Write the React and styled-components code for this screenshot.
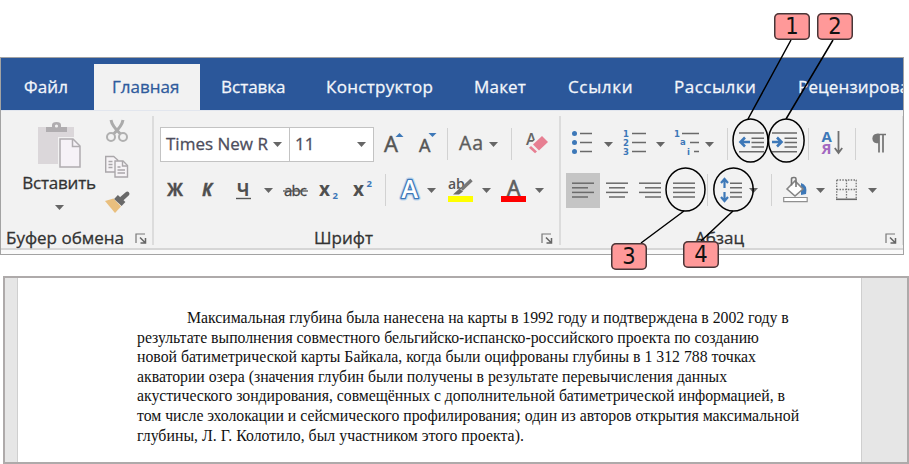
import React from 'react';
import styled, { createGlobalStyle } from 'styled-components';

const UI = '"Open Sans", "Noto Sans", sans-serif';
const INK = '#6a6a6a';
const BLUE = '#3d78b8';

const GlobalStyle = createGlobalStyle`
  * { box-sizing: border-box; }
  body { margin: 0; background: #fff; overflow: hidden; }
  svg { display: block; }
`;

const Page = styled.main`
  position: relative;
  width: 909px;
  height: 464px;
  padding-top: 57px;
  overflow: hidden;
  font-family: ${UI};
`;

/* ---------- ribbon ---------- */
const Ribbon = styled.section`
  width: 904px;
  height: 198px;
  border: 1px solid #a3a3a3;
  background: #fafafa;
  overflow: hidden;
  -webkit-text-stroke: 0.3px currentColor;

  svg { -webkit-text-stroke: initial; }
`;

const TabBar = styled.nav`
  display: flex;
  align-items: flex-end;
  height: 52px;
  background: #2b579a;
  overflow: hidden;
`;

const Tab = styled.div`
  flex: none;
  width: ${(p) => p.$w}px;
  height: 46px;
  padding-left: ${(p) => p.$inset}px;
  font-size: 17px;
  line-height: 46px;
  letter-spacing: ${(p) => p.$track || 0}px;
  white-space: nowrap;
  color: ${(p) => (p.$active ? '#2f5b9d' : '#f3f6fb')};
  background: ${(p) => (p.$active ? '#f2f2f2' : 'transparent')};
`;

const Body = styled.div`
  display: flex;
  height: 140px;
  padding-top: 1px;
  background: #f2f2f2;
  border-top: 1px solid #e2e6ee;
  border-bottom: 2px solid #d6d6d6;
`;

const Group = styled.div`
  display: flex;
  flex-direction: column;
  flex: none;
  width: ${(p) => p.$w}px;
  height: 137px;
`;

const GroupDivider = styled.div`
  flex: none;
  width: 2px;
  height: 129px;
  margin-top: 4px;
  background: #dcdcdc;
`;

const Tools = styled.div`
  height: 117px;
  padding-top: 14px;
`;

const Row = styled.div`
  display: flex;
  align-items: center;
  height: 36px;
  margin-bottom: 10px;
`;

const Footer = styled.div`
  display: flex;
  align-items: center;
  height: 18px;
  padding-left: ${(p) => p.$inset}px;
`;

const Label = styled.span`
  width: ${(p) => p.$w}px;
  font-size: 17px;
  line-height: 18px;
  white-space: nowrap;
  color: #333;
`;

const Clipboard = styled.div`
  display: flex;
  height: 117px;
`;

const PasteButton = styled.div`
  display: flex;
  flex-direction: column;
  align-items: center;
  width: 80px;
  margin-left: 18px;
  padding-top: 10px;
`;

const PasteText = styled.span`
  margin-top: 3px;
  font-size: 17px;
  line-height: 24px;
  letter-spacing: -0.2px;
  white-space: nowrap;
  color: #333;
`;

const ClipboardSide = styled.div`
  display: flex;
  flex-direction: column;
  gap: 12px;
  margin-left: 6px;
  padding-top: 7px;
`;

const Glyph = styled.svg`
  flex: none;
  width: ${(p) => p.$w}px;
  height: ${(p) => p.$h || 36}px;
  margin-left: ${(p) => p.$ml || 0}px;
  overflow: visible;
`;

const Combo = styled.div`
  display: flex;
  align-items: center;
  flex: none;
  width: ${(p) => p.$w}px;
  height: 35px;
  margin-left: ${(p) => p.$ml}px;
  padding: 0 7px 0 5px;
  border: 1px solid #c3c3c3;
  background: #fff;
  font-size: 17px;
  white-space: nowrap;
  color: #4d4d5c;
`;

const ComboValue = styled.span`
  flex: 1;
  line-height: 24px;
  margin-top: -1px;
`;

const Divider = styled.i`
  flex: none;
  width: 1px;
  height: 32px;
  margin-left: ${(p) => p.$ml}px;
  background: #d2d2d2;
`;

const Style = styled.span`
  flex: none;
  width: ${(p) => p.$w}px;
  margin-left: ${(p) => p.$ml}px;
  font-size: 17px;
  line-height: 24px;
  font-weight: 700;
  font-style: ${(p) => (p.$italic ? 'italic' : 'normal')};
  white-space: nowrap;
  color: #4f4f4f;
`;

const Selected = styled.div`
  flex: none;
  display: flex;
  align-items: center;
  width: 34px;
  height: 35px;
  margin-left: 5px;
  background: #c5c5c5;
`;

/* ---------- document ---------- */
const Document = styled.section`
  display: flex;
  width: 906px;
  height: 188px;
  margin: 21px 0 0 3px;
  border: 2px solid #aeaaaa;
  background: #e6e6e6;
`;

const Sheet = styled.article`
  width: 845px;
  margin-left: 12px;
  padding: 30px 0 0 119px;
  border: solid #cfcfcf;
  border-width: 0 1px;
  background: #fff;
  color: #111;
  font-family: "Liberation Serif", "Times New Roman", serif;
  font-size: 15.8px;
`;

const Line = styled.div`
  height: 19.6px;
  line-height: 19.6px;
  padding-left: ${(p) => p.$indent || 0}px;
  letter-spacing: ${(p) => p.$track}px;
  white-space: nowrap;
`;

/* ---------- callouts ---------- */
const Leaders = styled.svg`
  position: absolute;
  left: 0;
  top: 0;
  width: 909px;
  height: 464px;
  pointer-events: none;
`;

const Callout = styled.div`
  position: absolute;
  left: ${(p) => p.$x}px;
  top: ${(p) => p.$y}px;
  width: 36px;
  height: 27px;
  border-radius: 5px;
  background: #ff9999;
  box-shadow: inset 0 0 0 1.5px #463638;
  font-family: "DejaVu Sans Condensed", "DejaVu Sans", sans-serif;
  font-stretch: condensed;
  font-size: 23.5px;
  line-height: 27px;
  text-align: center;
  color: #111;
`;

/* ---------- icons ---------- */
const Caret = ({ ml }) => (
  <Glyph $w={9} $h={5} $ml={ml} viewBox="0 0 9 5">
    <path d="M0 0h9L4.5 5z" fill="#666" />
  </Glyph>
);

const Launcher = ({ ml }) => (
  <Glyph $w={12} $h={11} $ml={ml} viewBox="0 0 12 11">
    <path d="M1 10V1h9" fill="none" stroke="#777" strokeWidth="1.2" />
    <path d="M5 4.500l5 5M10.500 5v5h-5" fill="none" stroke="#666" strokeWidth="1.5" />
  </Glyph>
);

const PasteIcon = () => (
  <Glyph $w={44} $h={46} viewBox="0 0 44 46">
    <path d="M1 5h36v37H1z" fill="#dbd7da" />
    <path d="M9 10V5h6V3q0-3 4.500-3T24 3v2h6v5z" fill="#b0adb0" />
    <circle cx="19.500" cy="4" r="1.600" fill="#f2f2f2" />
    <path d="M21 15h18l7 8v24H21z" fill="#f2f2f2" />
    <path d="M23 17h13l7 7v21H23z" fill="#f6f2f7" stroke="#b0acb0" strokeWidth="1.500" />
    <path d="M35.500 17v7.500H43" fill="none" stroke="#b0acb0" strokeWidth="1.500" />
  </Glyph>
);

const CutIcon = () => (
  <Glyph $w={24} $h={24} viewBox="0 0 24 24">
    <path d="M6 1q1 6 9.500 14M18 1q-1 6-9.500 14" fill="none" stroke="#ababab" strokeWidth="3" />
    <circle cx="6" cy="18" r="4" fill="none" stroke="#b0b0b0" strokeWidth="2" />
    <circle cx="18" cy="18" r="4" fill="none" stroke="#b0b0b0" strokeWidth="2" />
  </Glyph>
);

const CopyIcon = () => (
  <Glyph $w={24} $h={24} viewBox="0 0 24 24">
    <g fill="#f6f3f6" stroke="#aaa7aa" strokeWidth="1.400">
      <path d="M.7 1.500h8l4 3.500V17h-12z" />
      <path d="M10 6h8l4.500 4.500V22H10z" />
      <path d="M17.500 6v5h5M3.500 6.500h4M3.500 9.500h4M3.500 12.500h4M12.500 12h3M12.500 15h7.500M12.500 18h7.500" fill="none" />
    </g>
  </Glyph>
);

const BrushIcon = () => (
  <Glyph $w={24} $h={24} viewBox="0 0 24 24">
    <path d="M0 10l8.500-2.500 7.500 8L10 22z" fill="#e9bf7e" />
    <path d="M11 6l7.500 7" stroke="#696969" strokeWidth="5.500" />
    <path d="M17 7.500l5.200-4.700" stroke="#696969" strokeWidth="4.500" strokeLinecap="round" />
  </Glyph>
);

const GrowFont = ({ ml, w, size, up }) => (
  <Glyph $w={w} $ml={ml} viewBox={`0 0 ${w} 36`}>
    <text x="0" y="26" fontFamily={UI} fontSize={size} fill="#555" stroke="#555" strokeWidth=".5">A</text>
    <path d={up ? `M${w - 7.5} 11h8l-4-4z` : `M${w - 7.5} 7h8l-4 4z`} fill={BLUE} />
  </Glyph>
);

const CaseIcon = ({ ml }) => (
  <Glyph $w={24} $ml={ml} viewBox="0 0 24 36">
    <text x="0" y="23.500" fontFamily={UI} fontSize="19.500" textLength="24" fill="#5c5c5c" stroke="#5c5c5c" strokeWidth=".4">Aa</text>
  </Glyph>
);

const ClearFormat = ({ ml }) => (
  <Glyph $w={24} $ml={ml} viewBox="0 0 24 36">
    <text x="1" y="18.500" fontFamily={UI} fontSize="16" fontWeight="600" fill="#666">A</text>
    <path d="M5.500 18L16 8l8 7-10.500 10z" fill="#f2f2f2" />
    <path d="M8 18.500l9-8.500 6 6-9 8.500z" fill="#e77f92" />
    <path d="M6 20l6 5.500-2 1.800-6-5.500z" fill="#e77f92" />
  </Glyph>
);

const StrikeIcon = ({ ml }) => (
  <Glyph $w={25} $ml={ml} viewBox="0 0 25 36">
    <text x="1" y="24" fontFamily={UI} fontSize="15" textLength="23" fill="#444" stroke="#444" strokeWidth=".3">abc</text>
    <path d="M0 19h25" stroke="#555" strokeWidth="1.300" />
  </Glyph>
);

const ScriptIcon = ({ ml, sup }) => (
  <Glyph $w={19} $ml={ml} viewBox="0 0 19 36">
    <text x="0" y="24" fontFamily={UI} fontSize="19" fontWeight="700" fill="#505050">x</text>
    <text x="13.500" y={sup ? 15 : 27} fontFamily={UI} fontSize="9.500" fontWeight="700" fill={BLUE}>2</text>
  </Glyph>
);

const EffectsIcon = ({ ml }) => (
  <Glyph $w={21} $ml={ml} viewBox="0 0 21 36">
    <g fontFamily={UI} fontSize="25" fontWeight="600" strokeLinejoin="round">
      <text x="1.500" y="26" textLength="17" fill="none" stroke="#c2d8ee" strokeWidth="5">A</text>
      <text x="1.500" y="26" textLength="17" fill="#fff" stroke={BLUE} strokeWidth="2.600">A</text>
      <text x="1.500" y="26" textLength="17" fill="#fff">A</text>
    </g>
  </Glyph>
);

const HighlightIcon = ({ ml }) => (
  <Glyph $w={25} $ml={ml} viewBox="0 0 25 36">
    <text x="0" y="17" fontFamily={UI} fontSize="14" fontWeight="600" fill="#555">ab</text>
    <path d="M25 6L12 18l-5 5 8-1.500L25 10z" fill="#f2f2f2" />
    <path d="M23.500 8L13.500 17.500" stroke="#777" strokeWidth="3.500" />
    <path d="M11.500 16.500l3.500 3-4 3H5z" fill="#6c6c6c" />
    <path d="M0 24h25v6H0z" fill="#ffff00" />
  </Glyph>
);

const FontColorIcon = ({ ml }) => (
  <Glyph $w={25} $ml={ml} viewBox="0 0 25 36">
    <text x="6" y="24" fontFamily={UI} fontSize="21" fill="#5e5e5e" stroke="#5e5e5e" strokeWidth=".7">A</text>
    <path d="M0 24h25v6H0z" fill="#ff0000" />
  </Glyph>
);

const BulletsIcon = ({ ml }) => (
  <Glyph $w={20} $ml={ml} viewBox="0 0 20 36">
    {[7.5, 16.5, 25.5].map((y) => (
      <g key={y}>
        <circle cx="2.500" cy={y} r="2.500" fill={BLUE} />
        <path d={`M8 ${y}h12`} stroke={INK} strokeWidth="1.500" />
      </g>
    ))}
  </Glyph>
);

const NumbersIcon = ({ ml }) => (
  <Glyph $w={23} $ml={ml} viewBox="0 0 23 36">
    {[7.5, 16.5, 25.5].map((y, i) => (
      <g key={y}>
        <text x="0" y={y + 3.5} fontFamily='"DejaVu Sans", sans-serif' fontSize="8.500" fontWeight="700" fill={BLUE}>{i + 1}</text>
        <path d={`M9 ${y}h14`} stroke={INK} strokeWidth="1.500" />
      </g>
    ))}
  </Glyph>
);

const MultiLevelIcon = ({ ml }) => (
  <Glyph $w={25} $ml={ml} viewBox="0 0 25 36">
    <g fontFamily='"DejaVu Sans", sans-serif' fontSize="8.500" fontWeight="700" fill={BLUE}>
      <text x="0" y="11">1</text>
      <text x="6" y="19">a</text>
      <text x="13" y="29">i</text>
    </g>
    <path d="M8 7.500h17M16 16.500h9M20 25.500h5" stroke={INK} strokeWidth="1.500" />
  </Glyph>
);

const IndentIcon = ({ ml, out }) => (
  <Glyph $w={25} $ml={ml} viewBox="0 0 25 36">
    <path d="M0 7h25M12.500 12.200h12.500M12.500 16.600h12.500M12.500 21h12.500M0 25.800h25" stroke={INK} strokeWidth="1.500" />
    <path d={out ? 'M11 16H2M6 11.500L1.500 16 6 20.500' : 'M0 16h9M5 11.500L9.500 16 5 20.500'} fill="none" stroke={BLUE} strokeWidth="2.600" />
  </Glyph>
);

const SortIcon = ({ ml }) => (
  <Glyph $w={21} $ml={ml} viewBox="0 0 21 36">
    <g fontFamily={UI} fontSize="15" fontWeight="700">
      <text x="-.5" y="15.500" fill={BLUE}>А</text>
      <text x="-.5" y="28" fill="#a268c0">Я</text>
    </g>
    <path d="M16.500 5v21M12.800 22l3.700 5 3.700-5" fill="none" stroke="#707070" strokeWidth="1.800" />
  </Glyph>
);

const PilcrowIcon = ({ ml }) => (
  <Glyph $w={15} $ml={ml} viewBox="0 0 15 36">
    <path d="M6 8.500h9M8 8v18.500M12 8v18.500" stroke="#737373" strokeWidth="1.700" />
    <path d="M8 7.700v9.500H5.500A4.800 4.800 0 0 1 5.500 7.700z" fill="#777" />
  </Glyph>
);

const ALIGN = {
  left: [[0, 22], [0, 16], [0, 22], [0, 16]],
  center: [[0, 22], [3, 16], [0, 22], [3, 16]],
  right: [[0, 22], [6, 16], [0, 22], [6, 16]],
  justify: [[0, 22], [0, 22], [0, 22], [0, 22]],
};

const AlignIcon = ({ ml, kind }) => (
  <Glyph $w={22} $ml={ml} viewBox="0 0 22 36">
    {ALIGN[kind].map(([x, w], i) => (
      <path key={i} d={`M${x} ${11.2 + i * 4.6}h${w}`} stroke={INK} strokeWidth="1.500" />
    ))}
  </Glyph>
);

const SpacingIcon = ({ ml }) => (
  <Glyph $w={22} $ml={ml} viewBox="0 0 22 36">
    <path d="M4.500 7v9M1 11l3.500-4L8 11M4.500 20v9M1 25l3.500 4L8 25" fill="none" stroke={BLUE} strokeWidth="2.200" />
    <path d="M10 11.200h12M10 15.800h12M10 20.400h12M10 25h12" stroke={INK} strokeWidth="1.500" />
  </Glyph>
);

const BucketIcon = ({ ml }) => (
  <Glyph $w={25} $ml={ml} viewBox="0 0 25 36">
    <path d="M18 11q7 2 5 11l-5 1z" fill={BLUE} />
    <path d="M4 17l8-8 8 8-8 7z" fill="#fff" stroke="#858585" strokeWidth="1.600" />
    <path d="M8.500 13.500V7q0-1.500 2-1.500h1q1.500 0 1.500 1.500v8" fill="none" stroke="#777" strokeWidth="1.600" />
    <path d="M.7 25.500h23.500v4.200H.7z" fill="#fff" stroke="#909090" strokeWidth="1.200" />
  </Glyph>
);

const BordersIcon = ({ ml }) => (
  <Glyph $w={21} $ml={ml} viewBox="0 0 21 36">
    <path d="M.7 8h20M.7 17.500h20M.7 8v19M10.500 8v19M20.200 8v19" fill="none" stroke="#777" strokeWidth="1.300" strokeDasharray="1.500 1.300" />
    <path d="M0 27.300h21" stroke="#696969" strokeWidth="1.600" />
  </Glyph>
);

/* ---------- data ---------- */
const TABS = [
  ['Файл', 93, 23, 0.15],
  ['Главная', 106, 18, 0],
  ['Вставка', 106, 21, 0],
  ['Конструктор', 148, 20, 0.3],
  ['Макет', 94, 20, 0.2],
  ['Ссылки', 106, 20, 0.65],
  ['Рассылки', 124, 20, 0.5],
  ['Рецензирование', 160, 20, 0.15],
];

const LINES = [
  ['Максимальная глубина была нанесена на карты в 1992 году и подтверждена в 2002 году в', -0.03],
  ['результате выполнения совместного бельгийско-испанско-российского проекта по созданию', -0.015],
  ['новой батиметрической карты Байкала, когда были оцифрованы глубины в 1 312 788 точках', -0.01],
  ['акватории озера (значения глубин были получены в результате перевычисления данных', -0.015],
  ['акустического зондирования, совмещённых с дополнительной батиметрической информацией, в', -0.04],
  ['том числе эхолокации и сейсмического профилирования; один из авторов открытия максимальной', -0.015],
  ['глубины, Л. Г. Колотило, был участником этого проекта).', 0.04],
];

const CALLOUTS = [
  ['1', 774, 13],
  ['2', 817, 13],
  ['3', 611, 243],
  ['4', 683, 241],
];

export default function App() {
  return (
    <Page>
      <GlobalStyle />
      <Ribbon>
        <TabBar>
          {TABS.map(([name, w, inset, track]) => (
            <Tab key={name} $w={w} $inset={inset} $track={track} $active={name === 'Главная'}>{name}</Tab>
          ))}
        </TabBar>
        <Body>
          <Group $w={151}>
            <Clipboard>
              <PasteButton>
                <PasteIcon />
                <PasteText>Вставить</PasteText>
                <Glyph $w={9} $h={15} viewBox="0 0 9 15"><path d="M0 10h9L4.500 15z" fill="#666" /></Glyph>
              </PasteButton>
              <ClipboardSide>
                <CutIcon />
                <CopyIcon />
                <BrushIcon />
              </ClipboardSide>
            </Clipboard>
            <Footer $inset={5}><Label $w={129}>Буфер обмена</Label><Launcher /></Footer>
          </Group>
          <GroupDivider />
          <Group $w={405}>
            <Tools>
              <Row>
                <Combo $w={130} $ml={6}><ComboValue>Times New R</ComboValue><Caret /></Combo>
                <Combo $w={85} $ml={-1}><ComboValue>11</ComboValue><Caret /></Combo>
                <GrowFont ml={10} w={19} size={22} up />
                <GrowFont ml={16} w={17} size={18} />
                <Divider $ml={11} />
                <CaseIcon ml={11} />
                <Caret ml={6} />
                <Divider $ml={13} />
                <ClearFormat ml={13} />
              </Row>
              <Row>
                <Style $w={20} $ml={13}>Ж</Style>
                <Style $w={14} $ml={15} $italic>К</Style>
                <Glyph $w={15} $ml={20} viewBox="0 0 15 36">
                  <text x="1" y="24" fontFamily={UI} fontSize="17" fontWeight="700" fill="#4f4f4f">Ч</text>
                  <path d="M0 26.500h15" stroke="#555" strokeWidth="1.400" />
                </Glyph>
                <Caret ml={13} />
                <StrikeIcon ml={10} />
                <ScriptIcon ml={11} />
                <ScriptIcon ml={15} sup />
                <Divider $ml={13} />
                <EffectsIcon ml={14} />
                <Caret ml={6} />
                <HighlightIcon ml={12} />
                <Caret ml={9} />
                <FontColorIcon ml={10} />
                <Caret ml={9} />
              </Row>
            </Tools>
            <Footer $inset={160}><Label $w={227}>Шрифт</Label><Launcher /></Footer>
          </Group>
          <GroupDivider />
          <Group $w={341}>
            <Tools>
              <Row>
                <BulletsIcon ml={11} />
                <Caret ml={12} />
                <NumbersIcon ml={10} />
                <Caret ml={10} />
                <MultiLevelIcon ml={9} />
                <Caret ml={6} />
                <Divider $ml={13} />
                <IndentIcon ml={11} out />
                <IndentIcon ml={8} />
                <Divider $ml={11} />
                <SortIcon ml={13} />
                <Divider $ml={12} />
                <PilcrowIcon ml={15} />
              </Row>
              <Row>
                <Selected><AlignIcon ml={6} kind="left" /></Selected>
                <AlignIcon ml={6} kind="center" />
                <AlignIcon ml={11} kind="right" />
                <AlignIcon ml={12} kind="justify" />
                <Divider $ml={12} />
                <SpacingIcon ml={12} />
                <Caret ml={7} />
                <Divider $ml={13} />
                <BucketIcon ml={11} />
                <Caret ml={8} />
                <BordersIcon ml={11} />
                <Caret ml={11} />
              </Row>
            </Tools>
            <Footer $inset={134}><Label $w={190}>Абзац</Label><Launcher /></Footer>
          </Group>
          <GroupDivider />
        </Body>
      </Ribbon>
      <Document>
        <Sheet>
          {LINES.map(([text, track], i) => (
            <Line key={text} $indent={i === 0 ? 50 : 0} $track={track}>{text}</Line>
          ))}
        </Sheet>
      </Document>
      <Leaders viewBox="0 0 909 464" fill="none" stroke="#000" strokeWidth="1.500">
        <ellipse cx="750.500" cy="140.500" rx="17.500" ry="21.500" />
        <ellipse cx="786.300" cy="140.500" rx="17.800" ry="21.500" />
        <ellipse cx="685.500" cy="189.500" rx="19.500" ry="21.500" />
        <ellipse cx="733.500" cy="189.500" rx="19.700" ry="21.500" />
        <path d="M791 40L748 119M833 40L786 119M684 211L641 243M733 211L701 241" />
      </Leaders>
      {CALLOUTS.map(([n, x, y]) => (
        <Callout key={n} $x={x} $y={y}>{n}</Callout>
      ))}
    </Page>
  );
}
